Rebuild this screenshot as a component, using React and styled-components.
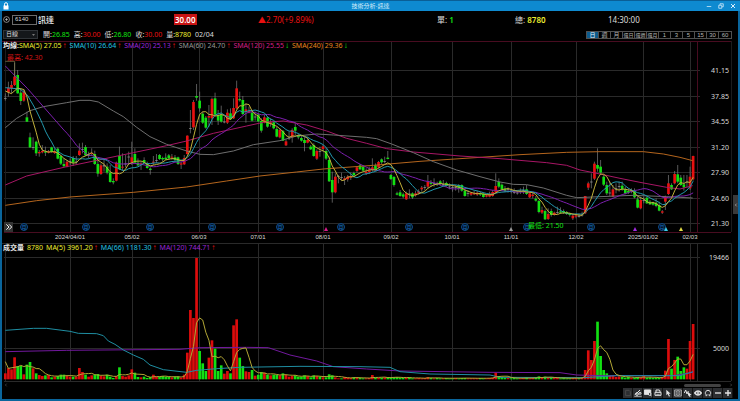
import React from 'react'
import styled, { createGlobalStyle } from 'styled-components'

const GlobalStyle = createGlobalStyle`
    * { box-sizing: border-box; }

    body {
        margin: 0;
        background-color: #000;
        color: #dcdcdc;
        font-family: "Noto Sans", "Noto Sans CJK TC", sans-serif;
        font-size: 7px;
    }

    button, input, select {
        margin: 0;
        padding: 0;
        border: 0;
        color: inherit;
        font: inherit;
    }
`

const RED = '#e81010'
const GREEN = '#12e012'
const YELLOW = '#eded30'
const CYAN = '#22c4e0'
const PURPLE = '#9a26d8'
const GREY = '#969696'
const PINK = '#d41e86'
const ORANGE = '#e8861e'

/* ---------- data ---------- */

// plot units : 3 per pixel, y grows downwards
const START = 16
const STEP = 9.253
const barX = (i) => START + STEP * i

// kind, high, body top, body bottom, low   (w = open equals close)
const candles = `
w 130 144 146 152,r 95 113 127 140,r 93 105 116 130,r 38 80 105 108,g 60 75 130 131,g 115 128 153 165,r 118 125 152 155,g 185 202 215 216,
g 248 262 292 294,w 262 291 293 300,g 272 275 310 318,r 300 306 310 320,r 285 303 307 310,g 290 304 308 318,r 300 304 308 310,g 290 292 306 308,
r 295 304 309 312,g 292 296 326 328,g 315 318 341 345,g 325 342 349 350,r 330 335 350 352,w 325 334 336 345,g 318 324 338 348,w 318 335 337 342,
r 280 302 315 318,w 278 298 300 310,g 285 291 316 318,w 305 314 317 325,r 295 309 312 318,g 302 312 342 345,g 330 342 371 380,r 340 346 372 375,
w 325 346 349 365,g 340 350 368 373,g 345 368 396 398,g 385 393 397 403,r 335 338 392 394,g 290 318 358 360,r 310 350 353 362,w 315 341 343 352,
w 305 320 322 345,r 275 322 337 345,g 295 312 338 340,g 325 338 346 348,r 335 340 344 360,g 322 330 338 340,g 335 340 354 356,g 352 356 360 374,
r 318 335 338 345,w 312 331 333 340,g 312 315 327 330,g 320 324 328 335,g 310 323 328 330,g 312 316 325 330,r 312 320 323 330,g 315 322 330 335,
g 320 322 342 345,r 335 340 344 357,r 315 324 343 345,r 256 257 312 314,w 180 235 237 250,r 150 156 232 240,g 102 138 143 152,g 125 152 175 185,
g 185 191 218 222,g 198 203 233 236,r 165 198 203 230,r 143 147 205 225,g 128 145 194 198,g 180 195 212 225,g 167 194 215 218,w 200 215 217 220,
r 178 188 218 222,g 175 190 208 210,r 145 174 205 207,r 92 115 175 178,g 125 147 151 155,g 138 150 192 195,r 160 178 186 218,r 170 183 188 190,
g 180 188 212 214,w 185 200 202 212,g 190 194 214 216,g 205 213 242 248,r 195 202 218 220,g 198 203 230 233,r 205 217 222 230,g 213 217 235 238,
g 230 237 260 262,r 235 240 262 265,g 240 243 272 273,r 268 274 286 288,w 245 263 265 270,r 235 240 262 278,g 220 231 242 255,g 252 257 262 268,
g 255 264 272 275,g 262 270 279 304,r 262 270 278 280,g 285 290 298 300,g 280 285 318 320,r 298 303 326 330,w 290 304 306 320,r 285 289 297 305,
g 293 303 326 330,g 320 330 394 396,g 365 390 427 458,r 370 380 427 430,w 375 378 380 400,w 368 381 383 390,r 378 385 390 405,r 375 380 388 395,
r 367 378 383 390,g 365 369 376 380,r 350 352 363 368,g 342 346 358 360,g 346 350 362 363,r 355 365 370 375,r 350 360 366 372,r 325 352 360 365,
g 340 346 360 362,r 333 336 352 355,g 325 328 337 342,w 320 333 335 340,g 303 323 327 328,g 372 375 387 390,g 378 381 405 410,g 425 430 434 436,
g 420 427 438 440,g 428 433 440 445,r 425 430 448 450,w 418 431 433 445,g 427 430 442 447,r 422 430 436 440,r 418 424 430 434,r 408 413 418 425,
w 405 412 414 422,r 375 395 410 415,g 390 397 402 410,w 385 400 402 410,g 395 399 403 408,g 390 394 402 408,w 390 402 404 410,g 395 399 407 410,
w 400 410 412 418,w 402 412 414 425,w 405 412 414 422,g 402 406 416 428,g 403 405 422 425,g 415 422 438 440,w 420 430 432 440,r 426 429 434 438,
r 422 430 433 435,r 422 428 434 438,g 425 430 434 438,g 427 431 441 443,r 432 436 440 442,r 425 433 440 442,r 420 426 438 440,r 370 408 428 430,
g 385 395 410 415,g 400 404 418 420,g 408 416 424 426,w 412 418 420 428,w 415 422 424 430,w 415 426 428 432,w 420 428 430 434,w 415 424 426 432,
w 410 420 422 432,g 405 418 432 435,r 425 430 442 444,r 428 434 438 445,g 438 446 452 455,g 450 453 486 490,r 470 480 488 492,g 478 483 508 510,
r 475 492 507 510,g 476 483 495 500,r 485 488 495 497,w 470 486 488 492,g 472 484 488 492,g 478 483 488 492,g 483 486 492 495,g 488 491 495 500,
r 490 497 505 510,r 492 496 500 505,w 490 498 500 503,w 485 494 496 500,r 438 438 490 492,r 395 400 413 420,w 370 395 397 415,r 335 341 386 390,
g 295 345 356 365,g 330 350 368 372,g 375 380 404 408,g 395 405 430 435,w 395 428 430 438,r 405 418 440 442,w 400 415 418 430,w 395 408 410 425,
g 395 407 418 422,g 410 418 430 433,g 415 423 428 432,w 415 422 424 430,g 415 424 442 445,g 440 448 473 475,r 440 450 475 478,w 440 450 452 460,
g 440 443 460 462,g 450 455 463 465,g 455 458 464 467,g 445 458 468 472,g 455 465 482 484,r 480 484 488 492,r 437 439 455 480,r 375 400 432 435,
g 400 405 418 420,r 363 372 400 403,g 345 373 395 400,g 375 383 405 408,g 375 403 412 422,w 375 395 397 412,r 350 380 415 420,r 317 318 388 392
`.trim().split(',').map((row) => {
    const [kind, ...v] = row.trim().split(' ')
    const [high, top, bottom, low] = v.map(Number)
    return { kind, high, top, bottom, low, close: kind === 'g' ? bottom : top }
})

const volumes = [
    18, 34, 30, 66, 40, 40, 15, 44, 52, 33, 18, 13, 10, 12, 13, 6, 8, 10, 14, 14, 10, 8, 8, 8, 34, 22, 14, 8, 12, 14, 16, 10,
    9, 14, 8, 4, 10, 36, 10, 8, 12, 30, 20, 7, 6, 8, 4, 7, 14, 8, 8, 10, 8, 7, 6, 8, 9, 5, 14, 80, 208, 184, 364, 85,
    48, 25, 65, 117, 92, 25, 42, 17, 25, 18, 162, 180, 65, 40, 24, 22, 28, 11, 14, 22, 20, 14, 12, 14, 13, 12, 18, 13, 8, 10, 12, 8,
    8, 12, 10, 6, 12, 10, 8, 6, 6, 15, 12, 6, 3, 3, 7, 5, 4, 6, 5, 4, 3, 3, 4, 13, 5, 4, 5, 6, 7, 5,
    6, 7, 5, 4, 5, 6, 3, 3, 4, 3, 4, 7, 4, 3, 4, 3, 3, 4, 3, 3, 4, 3, 4, 4, 3, 3, 3, 3, 4, 3,
    3, 4, 5, 20, 10, 7, 5, 4, 3, 4, 3, 3, 4, 5, 3, 4, 5, 9, 6, 8, 4, 6, 4, 4, 3, 4, 3, 3, 4, 4,
    3, 5, 28, 87, 58, 115, 173, 70, 28, 18, 12, 12, 7, 9, 7, 5, 8, 5, 5, 7, 6, 10, 5, 6, 4, 5, 5, 7,
    26, 121, 32, 58, 68, 25, 36, 32, 115, 166
]
const VOLUME_BASE = 493

const closes = candles.map((c) => c.close)

const isUp = (i) => {
    const { kind, close } = candles[i]
    const previous = i === 0 ? close : closes[i - 1]
    if (kind === 'r') return true
    return kind === 'w' ? close <= previous : close < previous - 10
}

const average = (values, size, lead) => {
    const points = [...lead]
    for (let i = size - 1; i < values.length; i++) {
        const part = values.slice(i - size + 1, i + 1)
        const mean = part.reduce((a, b) => a + b, 0) / size
        points.push([barX(i).toFixed(1), mean.toFixed(1)])
    }
    return points.join(' ')
}

const priceLines = [
    { color: '#b5651d', points: '16,466 110,452 210,441 400,427 560,411 680,393 780,378 890,366 970,357 1120,346 1260,334 1440,322 1560,314 1700,307 1800,305 1930,305 1990,312 2040,322 2078,332' },
    { color: '#a81665', points: '16,405 80,378 200,350 310,327 400,308 500,287 560,273 640,250 740,228 790,217 850,213 920,225 980,243 1040,265 1100,280 1160,296 1240,306 1380,318 1500,326 1640,338 1700,346 1740,360 1800,372 1860,385 1920,397 2000,412 2040,417 2078,407' },
    { color: '#6e6e6e', points: '16,233 50,205 90,182 130,170 200,158 240,151 270,151 295,156 340,183 370,200 410,232 450,260 500,283 560,303 600,313 640,314 700,303 760,284 840,272 890,258 950,252 1000,255 1100,262 1130,266 1175,282 1240,308 1300,335 1370,360 1440,380 1500,396 1540,403 1580,404 1630,414 1700,436 1730,443 1800,440 1900,436 2000,440 2078,444' },
    { color: '#7d1fb0', points: average(closes, 20, [[16, 48], [82, 115]]) },
    { color: '#2299ae', points: average(closes, 10, [[16, 113], [60, 117], [82, 135]]) },
    { color: '#c2b13a', points: average(closes, 5, [[16, 123], [34, 131]]) }
]

const volumeLines = [
    { color: '#72199f', points: '16,410 200,406 540,403 600,398 740,397 805,398 870,420 950,438 1000,455 1100,462 1200,468 1470,472 1680,473 1730,480 1800,482 2020,482 2079,472' },
    { color: '#1f8fa3', points: '16,346 100,340 140,340 210,349 235,355 290,356 310,362 325,378 345,388 370,405 400,420 430,433 450,450 490,464 560,472 590,466 650,461 720,457 900,454 1080,455 1170,457 1200,470 1290,477 1470,480 1500,487 1750,488 1850,482 2040,482 2079,470' },
    { color: '#b3a735', points: average(volumes.map((v) => VOLUME_BASE - v), 5, [[16, 440], [25, 460]]) }
]

const days = [
    [70, '2024/04/01'], [132, '05/02'], [199, '06/03'], [258, '07/01'], [323, '08/01'], [391, '09/02'],
    [452, '10/01'], [511, '11/01'], [576, '12/02'], [643, '2025/01/02'], [690, '02/03']
]

const prices = [
    [70, '41.15'], [96, '37.85'], [121, '34.55'], [147, '31.20'], [172, '27.90'], [198, '24.60'], [223, '21.30']
]

const months = [24, 86, 150, 212, 280, 341, 409, 465, 527, 591, 662]

const flags = [[326, '#d81b8c'], [511, '#9a9a9a'], [635, '#a12be0'], [666, '#3ccbe8'], [681, '#e2dc46']]

const periods = ['日', '週', '月', '還日', '還週', '還月', '1', '3', '5', '15', '30', '60']

const averages = [
    ['SMA(5)', '27.05', YELLOW, true], ['SMA(10)', '26.64', CYAN, true], ['SMA(20)', '25.13', PURPLE, true],
    ['SMA(60)', '24.70', GREY, true], ['SMA(120)', '25.55', PINK, false], ['SMA(240)', '29.36', ORANGE, false]
]

const volumeAverages = [
    ['MA(5)', '3961.20', YELLOW, true], ['MA(66)', '1181.30', CYAN, true], ['MA(120)', '744.71', PURPLE, true]
]

/* ---------- window ---------- */

const Window = styled.div`
    padding: 0 2px 2px;
    background-color: #0a659c;
`

const TitleBar = styled.header`
    display: grid;
    grid-template-columns: 1fr auto 1fr;
    align-items: center;
    height: 11px;
    margin: 0 -2px;
    padding: 0 2px 0 3px;
    border-top: 1px solid #0a5f96;
    background-color: #0e8ad0;
    color: #d9eefb;

    h1 {
        margin: 0;
        font-size: 6px;
        font-weight: 400;
        line-height: 9px;
    }

    svg { display: block; }
`

const WindowButtons = styled.div`
    display: flex;
    justify-content: flex-end;
    gap: 4px;

    button {
        width: 8px;
        height: 8px;
        background: none;
    }
`

const Body = styled.main`
    background-color: #000;
    padding-bottom: 1px;
`

/* ---------- quote ---------- */

const QuoteRow = styled.section`
    display: grid;
    grid-template-columns: 172fr 84fr 179fr 78fr 93fr 130fr;
    align-items: center;
    height: 17px;
    font-size: 8px;
    line-height: 11px;
    white-space: nowrap;
`

const Stock = styled.div`
    display: flex;
    align-items: center;
    gap: 1px;
    padding-left: 1px;

    button {
        width: 8px;
        height: 7px;
        background: none;
    }

    svg { display: block; }

    input {
        width: 25px;
        height: 10px;
        padding-left: 2px;
        border: 1px solid #6c6c6c;
        background-color: #000;
        font-family: "Liberation Sans", sans-serif;
        font-size: 6px;
    }

    strong {
        color: #f2f2f2;
        font-weight: 500;
    }
`

const LastPrice = styled.strong`
    justify-self: start;
    padding: 0 1px;
    background-color: #c81414;
    color: #fff;
    font-weight: 600;
`

const Value = styled.span`
    color: ${({ $color }) => $color || '#dcdcdc'};
    font-weight: ${({ $strong }) => $strong ? 600 : 400};
`

const InfoRow = styled.section`
    display: flex;
    align-items: center;
    gap: 4px;
    height: 13px;
    padding: 0 6px 0 1px;
    line-height: 9px;
    white-space: nowrap;
`

const SelectBox = styled.div`
    display: grid;
    align-items: center;
    width: 35px;
    height: 9px;
    margin-right: 1px;
    border: 1px solid #303438;
    background-color: #14171a;

    select, svg { grid-area: 1 / 1; }

    select {
        appearance: none;
        width: 100%;
        height: 7px;
        padding-left: 2px;
        background: none;
        font-size: 6px;
        line-height: 7px;
    }

    svg {
        justify-self: end;
        margin-right: 2px;
        pointer-events: none;
    }
`

const Periods = styled.nav`
    display: grid;
    grid-template-columns: repeat(12, 12px);
    height: 8px;
    margin-left: auto;
    border: 1px solid #505050;
`

const PeriodButton = styled.button`
    overflow: hidden;
    border-right: 1px solid #505050;
    background-color: ${({ $active }) => $active ? '#0d5c8c' : '#000'};
    color: ${({ $active }) => $active ? '#e8f4fb' : '#b4b4b4'};
    font-family: "Liberation Sans", "Noto Sans CJK TC", sans-serif;
    font-size: ${({ $wide }) => $wide ? 5 : 6}px;
    line-height: 6px;
    white-space: nowrap;

    &:last-child { border-right: 0; }
`

/* ---------- chart panes ---------- */

const Pane = styled.section`
    display: grid;
    align-items: start;

    > * { grid-area: 1 / 1; }
`

const Chart = styled.svg`
    display: block;
    width: 100%;
    height: auto;
`

const Legend = styled.div`
    display: flex;
    gap: 3px;
    padding-left: 1px;
    height: 9px;
    line-height: 9px;
    white-space: nowrap;
    z-index: 1;

    b {
        color: #e8e8e8;
        font-weight: 600;
    }
`

const Arrow = styled.span`
    display: inline-block;
    width: 4px;
    margin-left: 1px;
    color: ${({ $up }) => $up ? RED : GREEN};
    font-family: "Liberation Sans", sans-serif;
    font-size: 8px;
    font-weight: 700;
`

const AxisText = styled.text`
    fill: #d8d8d8;
    font-size: ${({ $small }) => $small ? 6 : 7}px;
    font-family: ${({ $small }) => $small ? '"Liberation Sans", sans-serif' : 'inherit'};
    text-anchor: ${({ $small }) => $small ? 'middle' : 'end'};
`

const NoteText = styled.text`
    fill: ${({ $color }) => $color};
    font-size: 7px;
`

const MonthText = styled.text`
    fill: #1673c4;
    font-size: 5px;
    text-anchor: middle;
`

const SideButton = styled.button`
    align-self: end;
    justify-self: ${({ $right }) => $right ? 'end' : 'start'};
    display: grid;
    place-items: center;
    width: ${({ $right }) => $right ? 5 : 9}px;
    height: ${({ $right }) => $right ? 19 : 10}px;
    margin: ${({ $right }) => $right ? '0 0 29px' : '0 0 11px 2px'};
    background-color: ${({ $right }) => $right ? '#3a3a3a' : '#333'};
    color: #f0f0f0;
`

const ScrollTrack = styled.div`
    display: grid;
    grid-template-columns: 4px 676fr 37fr 8fr 4px;
    align-items: center;
    height: 6px;
    padding: 0 5px 0 2px;
    color: #707070;

    svg { display: block; }
`

const ScrollThumb = styled.div`
    grid-column: 3;
    height: 3px;
    border-radius: 2px;
    background-color: #424242;
`

const Tools = styled.footer`
    display: flex;
    justify-content: flex-end;
    height: 10px;
    padding-right: 5px;
`

const ToolButton = styled.button`
    display: grid;
    place-items: center;
    width: 10px;
    height: 10px;
    border-right: 1px solid #111;
    background-color: #2c2e31;
    color: ${({ $off }) => $off ? '#4a4a4a' : '#e4e4e4'};
`

const Glyph = ({ size = 8, children }) => (
    <svg width={size} height={size} viewBox="0 0 24 24" fill="none" stroke="currentColor" strokeWidth="3" aria-hidden="true">
        {children}
    </svg>
)

const tools = [
    ['上一步', <path d="M5 4h10l4 4v12H5z" />, true],
    ['畫線', <><path d="M2 17l7-5 9-9" /><circle cx="9" cy="15" r="4" /><circle cx="18" cy="13" r="3" /><path d="M1 22h22" strokeWidth="2" /></>],
    ['查詢', <><path d="M1 3h19v13H1z" fill="currentColor" /><circle cx="17" cy="15" r="4" fill="#2c2e31" /><path d="M19 18l4 4" /></>],
    ['列印', <><path d="M6 10V3h10l2 3v4M3 10h18v9H3z" /><path d="M7 16h10" strokeWidth="2" /></>],
    ['游標', <path d="M7 2v17l4-4 4 8 3-2-4-7h6z" fill="currentColor" stroke="none" />],
    ['資訊', <><path d="M2 3h20v18H2z" strokeWidth="2" /><path d="M12 3v18M5 8h4M5 12h4M5 16h4M15 8h4M15 12h4M15 16h4" strokeWidth="2" /></>],
    ['走勢', <><path d="M1 12l4-9 4 12 4-9" /><path d="M12 9l11 9h-5l2 5h-4l-2-4-2 2z" fill="currentColor" stroke="none" /></>],
    ['顯示', <><path d="M2 12q10-12 20 0-10 12-20 0z" strokeWidth="4" /><circle cx="12" cy="12" r="2" /></>],
    ['重新整理', <><path d="M8 19a8 8 0 1 1 8 0" /><path d="M4 20h5v-5M20 20h-5v-5" strokeWidth="2" /></>],
    ['縮小', <path d="M3 12h18" strokeWidth="4" />],
    ['放大', <path d="M3 12h18M12 3v18" strokeWidth="4" />]
]

const Averages = ({ items }) => items.map(([name, value, color, up]) => (
    <Value key={name} $color={color}>
        {name} {value}<Arrow $up={up}>{up ? '↑' : '↓'}</Arrow>
    </Value>
))

const Lines = ({ items }) => items.map((line) => (
    <polyline key={line.color} points={line.points} fill="none" stroke={line.color} strokeWidth="3" strokeLinejoin="round" />
))

const PriceChart = () => (
    <Chart viewBox="2 41 736 202" role="img" aria-label="日線圖">
        <g stroke="#2a2a2a" fill="none">
            {prices.map(([y]) => <path key={y} d={`M4 ${y}.5H700`} />)}
            {days.map(([x]) => <path key={x} d={`M${x}.5 41V232`} />)}
            <path d="M5.5 41V232M731.5 41V232" stroke="#1c1c1c" />
        </g>
        <path d="M2 41.5H731M697.5 41V232M4 232.5H731" stroke="#480c20" fill="none" />

        <g transform="translate(0 50) scale(0.33333)">
            {candles.map((c, i) => (
                <g key={i}>
                    <path d={`M${barX(i)} ${c.high}V${c.low}`} stroke="#858585" strokeWidth="2" />
                    <rect
                        x={barX(i) - 4}
                        y={c.top}
                        width="8"
                        height={c.bottom - c.top}
                        fill={c.kind === 'w' ? '#9a9a9a' : c.kind === 'r' ? RED : GREEN}
                    />
                </g>
            ))}
            <Lines items={priceLines} />
            <path d="M16 34H44V80" fill="none" stroke="#8d8250" strokeWidth="2" />
        </g>

        {months.map((x) => (
            <g key={x}>
                <circle cx={x} cy="227" r="3.5" fill="#03101f" stroke="#0e4d8c" />
                <MonthText x={x} y="229">月</MonthText>
            </g>
        ))}
        {flags.map(([x, color]) => <path key={x} d={`M${x} 227l2 4h-4z`} fill={color} />)}

        <NoteText x="7" y="60" $color="#d41414">最高: 42.30</NoteText>
        <NoteText x="528" y="228" $color={GREEN}>最低: 21.50</NoteText>

        {prices.map(([y, label]) => <AxisText key={label} x="729" y={y + 3}>{label}</AxisText>)}
        {days.map(([x, label]) => <AxisText key={label} $small x={x} y="239">{label}</AxisText>)}
    </Chart>
)

const VolumeChart = () => (
    <Chart viewBox="2 243 736 139" role="img" aria-label="成交量圖">
        <g stroke="#2a2a2a" fill="none">
            <path d="M4 257.5H700M4 348.5H700" />
            {days.map(([x]) => <path key={x} d={`M${x}.5 243V381`} />)}
            <path d="M2 243.5H731.5V381M5.5 243V381M697.5 243V381M4 381.5H731" />
        </g>
        <g transform="translate(0 215) scale(0.33333)">
            {volumes.map((v, i) => (
                <rect
                    key={i}
                    x={barX(i) - 4}
                    y={VOLUME_BASE - v}
                    width="8"
                    height={v}
                    fill={isUp(i) ? '#dc0c0c' : GREEN}
                />
            ))}
            <Lines items={volumeLines} />
        </g>
        <AxisText x="729" y="260">19466</AxisText>
        <AxisText x="729" y="351">5000</AxisText>
    </Chart>
)

const App = () => {
    return (
        <Window>
            <GlobalStyle />
            <TitleBar>
                <svg width="6" height="8" viewBox="0 0 6 8" aria-hidden="true">
                    <path d="M1.5 4V2.2a1.5 1.5 0 0 1 3 0V4" fill="none" stroke="#fff" />
                    <rect x="0.5" y="3.5" width="5" height="4" fill="#fff" />
                </svg>
                <h1>技術分析-訊達</h1>
                <WindowButtons>
                    <button type="button" aria-label="最小化"><Glyph size={6}><path d="M3 14h18" /></Glyph></button>
                    <button type="button" aria-label="還原"><Glyph size={6}><path d="M3 9h12v12H3zM8 9V3h13v12h-6" /></Glyph></button>
                    <button type="button" aria-label="關閉"><Glyph size={6}><path d="M4 4l16 16M20 4L4 20" strokeWidth="4" /></Glyph></button>
                </WindowButtons>
            </TitleBar>

            <Body>
                <QuoteRow>
                    <Stock>
                        <button type="button" aria-label="加入">
                            <Glyph size={7}><circle cx="12" cy="12" r="10" strokeWidth="2" /><path d="M12 7v10M7 12h10" strokeWidth="2" /></Glyph>
                        </button>
                        <input aria-label="股票代號" defaultValue="6140" />
                        <strong>訊達</strong>
                    </Stock>
                    <LastPrice>30.00</LastPrice>
                    <Value $color={RED}>▲2.70(+9.89%)</Value>
                    <span>單: <Value $color={GREEN} $strong>1</Value></span>
                    <span>總: <Value $color={YELLOW} $strong>8780</Value></span>
                    <span>14:30:00</span>
                </QuoteRow>

                <InfoRow>
                    <SelectBox>
                        <select aria-label="週期" defaultValue="day">
                            <option value="day">日線</option>
                            <option value="week">週線</option>
                            <option value="month">月線</option>
                        </select>
                        <svg width="3" height="2" viewBox="0 0 3 2" aria-hidden="true"><path d="M0 0h3L1.5 2z" fill="#777" /></svg>
                    </SelectBox>
                    <span>開:<Value $color={GREEN}>26.85</Value></span>
                    <span>高:<Value $color={RED}>30.00</Value></span>
                    <span>低:<Value $color={GREEN}>26.80</Value></span>
                    <span>收:<Value $color={RED}>30.00</Value></span>
                    <span>量:<Value $color={YELLOW}>8780</Value></span>
                    <span>02/04</span>
                    <Periods>
                        {periods.map((label, i) => (
                            <PeriodButton key={label} type="button" $active={i === 0} $wide={label.startsWith('還')}>{label}</PeriodButton>
                        ))}
                    </Periods>
                </InfoRow>

                <Pane>
                    <PriceChart />
                    <Legend>
                        <span><b>均線:</b><Averages items={averages.slice(0, 1)} /></span>
                        <Averages items={averages.slice(1)} />
                    </Legend>
                    <SideButton type="button" aria-label="展開">
                        <Glyph><path d="M4 4l8 8-8 8M12 4l8 8-8 8" /></Glyph>
                    </SideButton>
                    <SideButton type="button" aria-label="收合" $right>
                        <Glyph size={4}><path d="M16 4l-8 8 8 8" /></Glyph>
                    </SideButton>
                </Pane>

                <Pane>
                    <VolumeChart />
                    <Legend>
                        <b>成交量</b>
                        <Value $color={YELLOW}>8780</Value>
                        <Averages items={volumeAverages} />
                    </Legend>
                </Pane>

                <ScrollTrack>
                    <Glyph size={4}><path d="M16 4l-8 8 8 8" /></Glyph>
                    <ScrollThumb />
                    <span />
                    <Glyph size={4}><path d="M8 4l8 8-8 8" /></Glyph>
                </ScrollTrack>

                <Tools>
                    {tools.map(([label, icon, off]) => (
                        <ToolButton key={label} type="button" aria-label={label} $off={off}><Glyph>{icon}</Glyph></ToolButton>
                    ))}
                </Tools>
            </Body>
        </Window>
    )
}

export default App
